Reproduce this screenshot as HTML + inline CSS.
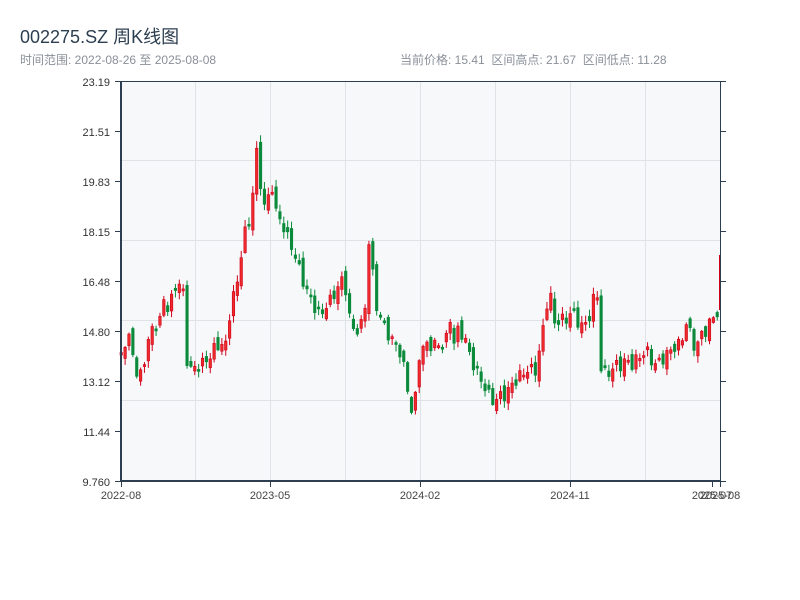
<!DOCTYPE html>
<html><head><meta charset="utf-8"><style>
body{margin:0;width:800px;height:600px;background:#fff;font-family:"Liberation Sans","Noto Sans CJK SC",sans-serif;overflow:hidden;position:relative}
.t{position:absolute;left:20px;top:23px;font-size:18px;color:#2c3e50}
.s{position:absolute;top:51px;font-size:12px;color:#8a9099}
</style></head><body>
<div class="t">002275.SZ 周K线图</div>
<div class="s" style="left:20px">时间范围: 2022-08-26 至 2025-08-08</div>
<div class="s" style="left:400px">当前价格: 15.41&nbsp;&nbsp;区间高点: 21.67&nbsp;&nbsp;区间低点: 11.28</div>
<svg id="c" width="800" height="600" style="position:absolute;left:0;top:0" font-family="Liberation Sans, sans-serif" font-size="11" fill="#333">
<rect x="121" y="81" width="599" height="400" fill="#f6f8fa"/>
<g stroke="#dfe3e8" stroke-width="1">
<line x1="195.5" y1="81" x2="195.5" y2="481"/><line x1="270.5" y1="81" x2="270.5" y2="481"/><line x1="345.5" y1="81" x2="345.5" y2="481"/><line x1="420.5" y1="81" x2="420.5" y2="481"/><line x1="495.5" y1="81" x2="495.5" y2="481"/><line x1="570.5" y1="81" x2="570.5" y2="481"/><line x1="645.5" y1="81" x2="645.5" y2="481"/>
<line x1="121" y1="160.5" x2="720" y2="160.5"/><line x1="121" y1="240.5" x2="720" y2="240.5"/><line x1="121" y1="320.5" x2="720" y2="320.5"/><line x1="121" y1="400.5" x2="720" y2="400.5"/>
</g>
<g id="cd"></g>
<g stroke="#2c3e50">
<line x1="121" y1="81.5" x2="720" y2="81.5" stroke-width="1"/>
<line x1="121" y1="81" x2="121" y2="482" stroke-width="2"/>
<line x1="121" y1="481" x2="720" y2="481" stroke-width="2"/>
<line x1="720.5" y1="81" x2="720.5" y2="482" stroke-width="1"/>
</g>
<g id="ax" stroke="#2c3e50"></g>
<g font-size="11" fill="#333" text-anchor="end">
<text x="110" y="86">23.19</text><text x="110" y="136">21.51</text><text x="110" y="186">19.83</text><text x="110" y="236">18.15</text><text x="110" y="286">16.48</text><text x="110" y="336">14.80</text><text x="110" y="386">13.12</text><text x="110" y="436">11.44</text><text x="110" y="486">9.760</text>
</g>
<g font-size="11" fill="#444" text-anchor="middle">
<text x="121" y="499">2022-08</text><text x="270" y="499">2023-05</text><text x="420" y="499">2024-02</text><text x="570" y="499">2024-11</text><text x="712" y="499">2025-07</text><text x="720" y="499">2025-08</text>
</g>
</svg>
<script>
(function(){
var ns="http://www.w3.org/2000/svg",ax=document.getElementById("ax"),cd=document.getElementById("cd");
function el(p,t,a){var e=document.createElementNS(ns,t);for(var k in a)e.setAttribute(k,a[k]);p.appendChild(e);return e;}
for(var i=0;i<9;i++){var yy=81.5+i*50;el(ax,"line",{x1:115,y1:yy,x2:121,y2:yy});el(ax,"line",{x1:720,y1:yy,x2:726,y2:yy});}
[121,270,420,570,712,720].forEach(function(x){el(ax,"line",{x1:x+.5,y1:481,x2:x+.5,y2:487});});
var P=[[121,350],[125,340],[130,340],[135,375],[140,375],[145,350],[150,330],[155,325],[160,320],[163,295],[167,310],[172,295],[177,275],[180,300],[183,290],[186,365],[190,370],[195,367],[200,365],[205,360],[210,355],[215,345],[220,345],[225,345],[230,300],[235,290],[238,270],[242,235],[246,230],[250,210],[255,150],[258,175],[262,200],[265,215],[268,190],[272,185],[275,215],[280,220],[285,235],[290,245],[295,260],[300,275],[305,290],[310,300],[315,310],[320,315],[325,305],[330,300],[335,290],[340,280],[345,290],[350,330],[355,330],[360,325],[365,300],[368,235],[372,280],[376,310],[380,320],[385,330],[390,340],[395,345],[400,355],[405,380],[410,410],[413,420],[416,360],[420,350],[425,345],[430,345],[435,345],[440,345],[445,340],[448,310],[452,345],[457,330],[462,335],[466,345],[470,360],[475,370],[480,380],[485,390],[490,400],[495,400],[500,395],[505,395],[510,385],[515,380],[520,375],[525,370],[530,370],[535,370],[540,340],[545,310],[548,280],[552,325],[556,320],[560,320],[565,320],[570,310],[575,320],[580,325],[585,325],[590,310],[594,290],[597,300],[600,370],[605,375],[610,370],[615,365],[620,365],[625,360],[630,365],[635,360],[640,355],[645,350],[650,360],[655,365],[660,360],[665,355],[670,350],[675,345],[680,345],[684,320],[688,330],[692,345],[696,345],[700,335],[705,330],[710,320],[714,315],[718,310]];
function yat(x){for(var i=1;i<P.length;i++){if(x<=P[i][0]){var a=P[i-1],b=P[i],t=(x-a[0])/(b[0]-a[0]);return a[1]+t*(b[1]-a[1]);}}return P[P.length-1][1];}
var prev=yat(119);
for(var k=0;k<155;k++){var x=120+k*3.87;if(x>718)break;
 var c=yat(x)+Math.sin(k*2.3)*6;var o=prev+Math.sin(k*1.7)*6;
 var up=c<o;var ty=Math.min(o,c),by=Math.max(o,c);if(by-ty<2)by=ty+2;
 var hi=ty-1-Math.abs(Math.sin(k*3.1))*6,lo=by+1+Math.abs(Math.cos(k*2.7))*6;
 var col=up?"#d0021b":"#0b8a3a";
 el(cd,"line",{x1:x+1.25,y1:hi,x2:x+1.25,y2:lo,stroke:col,"stroke-width":1});
 el(cd,"rect",{x:x,y:ty,width:2.5,height:by-ty,fill:up?"#ee2a2a":col,stroke:col,"stroke-width":0.6});
 prev=c;}
el(cd,"rect",{x:719,y:255,width:2,height:55,fill:"#d0021b"});
})();
</script>
</body></html>
